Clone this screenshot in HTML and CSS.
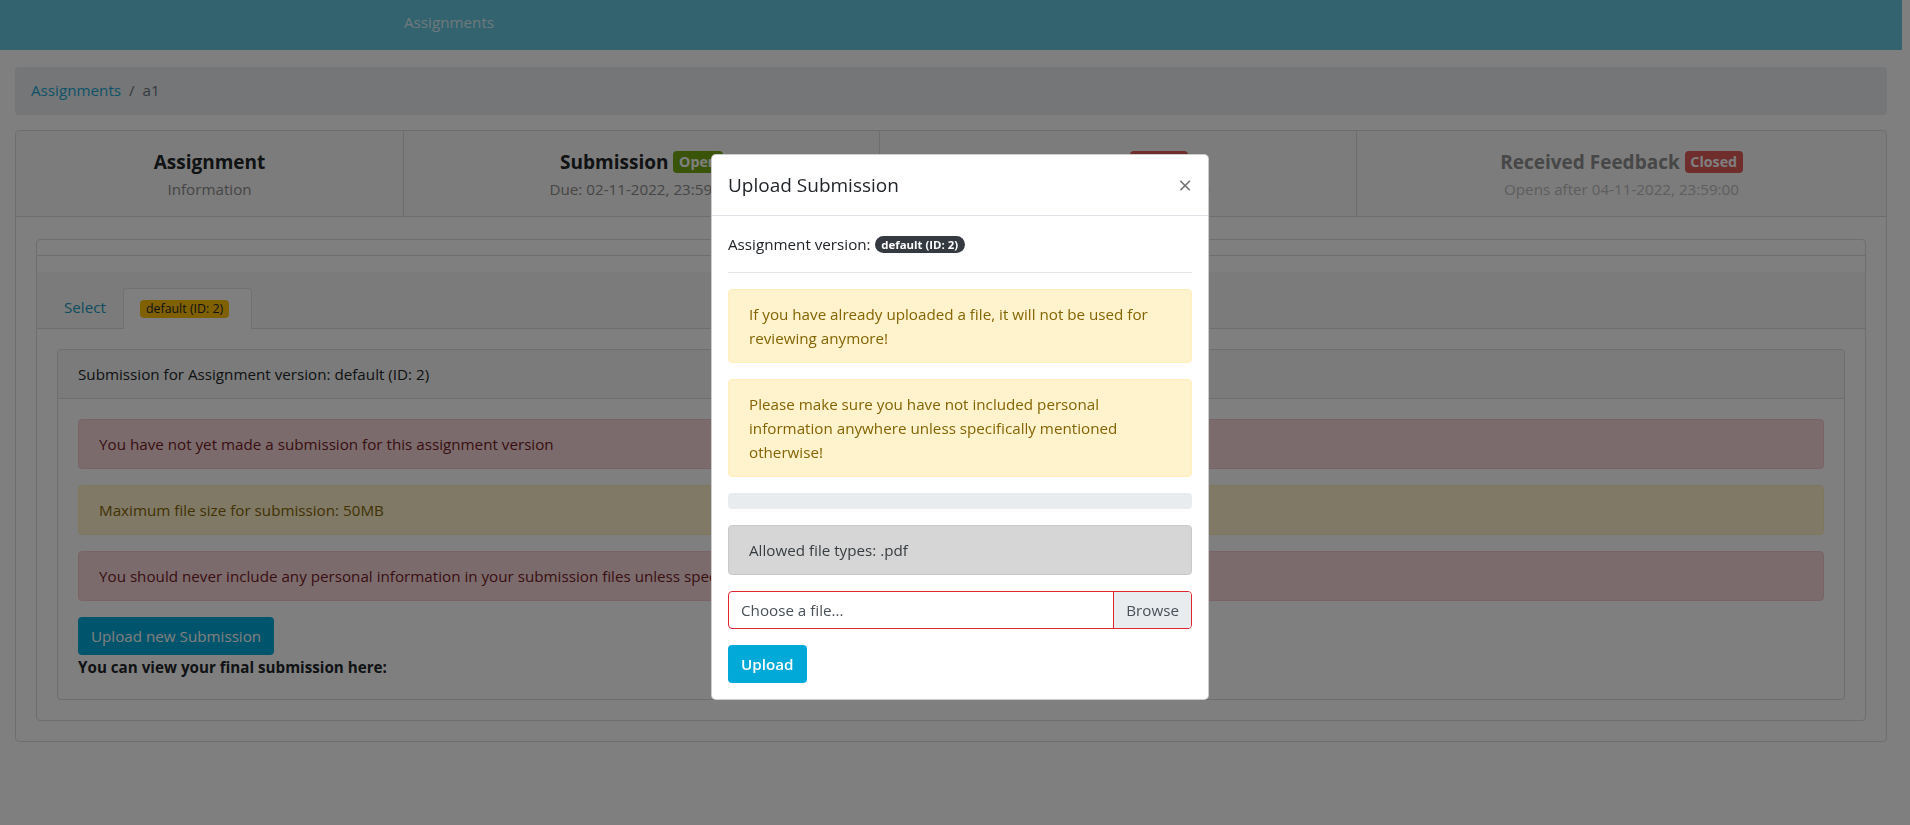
FILE: index.html
```html
<!DOCTYPE html>
<html lang="en">
<head>
<meta charset="utf-8">
<title>Assignment a1</title>
<link rel="stylesheet" href="styles.css">
</head>
<body>
<div class="page">
  <nav class="navbar">
    <a class="navbar-link" href="#">Assignments</a>
  </nav>
  <div class="container">
    <ol class="breadcrumb">
      <li class="crumb"><a href="#">Assignments</a></li>
      <li class="crumb crumb-active">a1</li>
    </ol>

    <div class="card outer">
      <div class="steps">
        <div class="step">
          <div class="step-title">Assignment</div>
          <div class="step-sub">Information</div>
        </div>
        <div class="step">
          <div class="step-title">Submission <span class="badge badge-open">Open</span></div>
          <div class="step-sub">Due: 02-11-2022, 23:59:00</div>
        </div>
        <div class="step step-muted">
          <div class="step-title">Reviews <span class="badge badge-closed">Closed</span></div>
          <div class="step-sub">Due: 04-11-2022, 23:59:00</div>
        </div>
        <div class="step step-muted">
          <div class="step-title">Received Feedback <span class="badge badge-closed">Closed</span></div>
          <div class="step-sub">Opens after 04-11-2022, 23:59:00</div>
        </div>
      </div>

      <div class="outer-body">
        <div class="card inner">
          <div class="inner-top"></div>
          <div class="inner-gap"></div>
          <div class="tabs">
            <a class="tab-link" href="#">Select</a>
            <div class="tab-active"><span class="badge badge-version">default (ID: 2)</span></div>
          </div>
          <div class="inner-body">
            <div class="card panel">
              <div class="panel-header">Submission for Assignment version: default (ID: 2)</div>
              <div class="panel-body">
                <div class="alert alert-danger">You have not yet made a submission for this assignment version</div>
                <div class="alert alert-warning">Maximum file size for submission: 50MB</div>
                <div class="alert alert-danger">You should never include any personal information in your submission files unless specifically mentioned otherwise!</div>
                <div class="btn-row"><button class="btn">Upload new Submission</button></div>
                <strong class="final-note">You can view your final submission here:</strong>
              </div>
            </div>
          </div>
        </div>
      </div>
    </div>
  </div>
</div>

<div class="backdrop"></div>

<div class="modal">
  <div class="modal-dialog">
    <div class="modal-content">
      <div class="modal-header">
        <h5 class="modal-title">Upload Submission</h5>
        <button class="close" type="button">&times;</button>
      </div>
      <div class="modal-body">
        <p class="version">Assignment version: <span class="badge badge-pill">default (ID: 2)</span></p>
        <hr class="rule">
        <div class="alert alert-warning">If you have already uploaded a file, it will not be used for reviewing anymore!</div>
        <div class="alert alert-warning">Please make sure you have not included personal information anywhere unless specifically mentioned otherwise!</div>
        <div class="progress"></div>
        <div class="alert alert-secondary">Allowed file types: .pdf</div>
        <div class="file-input">
          <span class="file-label">Choose a file...</span>
          <span class="file-browse">Browse</span>
        </div>
        <button class="btn btn-upload" type="button">Upload</button>
      </div>
    </div>
  </div>
</div>
</body>
</html>
```

FILE: styles.css
```css
* {
  box-sizing: border-box;
}

html,
body {
  height: 100%;
}

body {
  margin: 0;
  padding-right: 8px;
  font-family: "Open Sans", "Liberation Sans", sans-serif;
  font-size: 15.2px;
  line-height: 24px;
  color: #212529;
  background: #fff;
}

a {
  color: #1aa6cf;
  text-decoration: none;
}

/* navbar */
.navbar {
  height: 50px;
  background: #64c6de;
  display: flex;
  align-items: flex-start;
  padding: 10px 0 0 404px;
}

.navbar-link {
  color: rgba(255, 255, 255, 0.8);
  line-height: 24px;
}

.container {
  padding: 17px 15px 0;
}

/* breadcrumb */
.breadcrumb {
  display: flex;
  list-style: none;
  margin: 0 0 15px;
  padding: 11px 16px 13px;
  background: #e9ecef;
  border-radius: 4px;
}

.crumb + .crumb::before {
  content: "/";
  padding: 0 8px;
  color: #6c757d;
}

.crumb-active {
  color: #6c757d;
}

/* cards */
.card {
  background: #fff;
  border: 1px solid #dcdcdc;
  border-radius: 4px;
}

.steps {
  display: grid;
  grid-template-columns: 388px 476px 477px 1fr;
  background: #f8f8f8;
  border-bottom: 1px solid #dcdcdc;
  border-radius: 4px 4px 0 0;
}

.step {
  padding: 16px 8px 15px;
  text-align: center;
  border-right: 1px solid #dcdcdc;
}

.step:last-child {
  border-right: 0;
}

.step-title {
  font-size: 19px;
  line-height: 30px;
  font-weight: 700;
  color: #212529;
}

.step-sub {
  line-height: 24px;
  color: #8c8c8c;
}

.step-muted .step-title {
  color: #8e8e8e;
}

.step-muted .step-sub {
  color: #bcbcbc;
}

.badge {
  display: inline-block;
  padding: 0.25em 0.4em;
  font-size: 75%;
  font-weight: 700;
  line-height: 1;
  border-radius: 0.25rem;
  vertical-align: 2px;
  white-space: nowrap;
}

.badge-open {
  background: #74a815;
  color: #fff;
}

.badge-closed {
  background: #de5b59;
  color: #fff;
}

.badge-version {
  padding: 3px 6px;
  font-size: 12.4px;
  background: #ffc107;
  color: #212529;
  font-weight: 400;
  vertical-align: 1px;
}

.badge-pill {
  padding: 0.25em 0.6em;
  border-radius: 10rem;
  background: #343a40;
  color: #fff;
  vertical-align: 1px;
}

.outer-body {
  padding: 22px 20px 20px;
}

.inner-top {
  height: 16px;
  border-bottom: 1px solid #dcdcdc;
}

.inner-gap {
  height: 16px;
}

.tabs {
  display: flex;
  align-items: flex-end;
  padding: 14px 20px 0 10px;
  background: #f7f7f7;
  border-bottom: 1px solid #dcdcdc;
}

.tab-link {
  padding: 8px 16px;
  border: 1px solid transparent;
  line-height: 24px;
  color: #1a9bbf;
}

.tab-active {
  padding: 7px 22px 8px 16px;
  line-height: 24px;
  background: #fff;
  border: 1px solid #dee2e6;
  border-bottom: 0;
  border-radius: 4px 4px 0 0;
  margin-bottom: -1px;
  height: 41px;
}

.inner-body {
  padding: 20px;
}

.panel-header {
  padding: 12px 20px;
  background: #f7f7f7;
  border-bottom: 1px solid #dcdcdc;
  border-radius: 4px 4px 0 0;
}

.panel-body {
  padding: 20px;
}

.alert {
  padding: 12px 20px;
  border: 1px solid transparent;
  border-radius: 4px;
  margin-bottom: 16px;
}

.alert-danger {
  color: #721c24;
  background: #f8d7da;
  border-color: #f5c6cb;
}

.alert-warning {
  color: #856404;
  background: #fff3cd;
  border-color: #ffeeba;
}

.alert-secondary {
  color: #383d41;
  background: #d6d6d6;
  border-color: #c9c9c9;
}

.btn {
  display: inline-block;
  padding: 6px 12px;
  font-family: inherit;
  font-size: 15.2px;
  line-height: 24px;
  color: #fff;
  background: #00a9d8;
  border: 1px solid transparent;
  border-radius: 4px;
  cursor: pointer;
}

.final-note {
  display: block;
  font-weight: 700;
}

/* modal */
.backdrop {
  position: fixed;
  inset: 0;
  background: rgba(0, 0, 0, 0.5);
}

.modal {
  position: fixed;
  inset: 0;
  display: flex;
  justify-content: center;
  align-items: flex-start;
  padding-left: 10px;
}

.modal-dialog {
  width: 498px;
  margin-top: 154px;
}

.modal-content {
  background: #fff;
  border: 1px solid rgba(0, 0, 0, 0.2);
  border-radius: 5px;
}

.modal-header {
  display: flex;
  justify-content: space-between;
  align-items: center;
  padding: 15px 16px;
  border-bottom: 1px solid #dee2e6;
}

.modal-title {
  margin: 0;
  font-size: 19px;
  line-height: 30px;
  font-weight: 400;
}

.close {
  padding: 0;
  background: none;
  border: 0;
  font-family: inherit;
  font-size: 24px;
  font-weight: 400;
  line-height: 1;
  color: #000;
  opacity: 0.55;
}

.modal-body {
  padding: 16px;
}

.version {
  margin: 0;
}

.rule {
  margin: 16px 0;
  border: 0;
  border-top: 1px solid rgba(0, 0, 0, 0.1);
}

.progress {
  height: 16px;
  background: #e9ecef;
  border-radius: 4px;
  margin-bottom: 16px;
}

.file-input {
  display: flex;
  height: 38px;
  margin-bottom: 16px;
  border: 1px solid #e0262e;
  border-radius: 4px;
  overflow: hidden;
}

.file-label {
  flex: 1;
  padding: 6px 12px;
  color: #495057;
}

.file-browse {
  padding: 6px 12px;
  color: #495057;
  background: #e9ecef;
  border-left: 1px solid #e0262e;
}

.btn-upload {
  font-weight: 600;
}
```
